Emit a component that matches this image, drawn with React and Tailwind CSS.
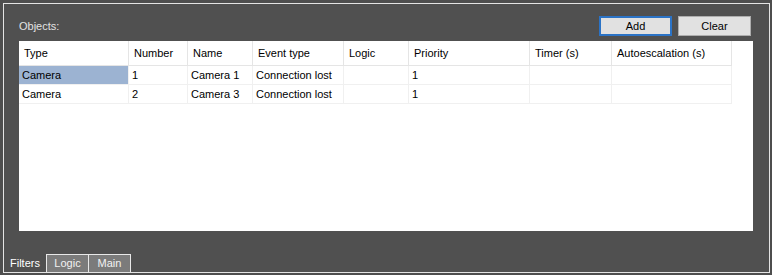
import React from 'react';

const columns = [
  { label: 'Type', w: 'w-[110px]' },
  { label: 'Number', w: 'w-[59px]' },
  { label: 'Name', w: 'w-[65px]' },
  { label: 'Event type', w: 'w-[91px]' },
  { label: 'Logic', w: 'w-[65px]' },
  { label: 'Priority', w: 'w-[121px]' },
  { label: 'Timer (s)', w: 'w-[82px]' },
  { label: 'Autoescalation (s)', w: 'w-[120px]' },
];

const rows = [
  ['Camera', '1', 'Camera 1', 'Connection lost', '', '1', '', ''],
  ['Camera', '2', 'Camera 3', 'Connection lost', '', '1', '', ''],
];

const App = () => {
  return (
    <div className="w-[772px] h-[275px] bg-[#4e4e4e] pt-[3px] pl-[3px] font-['Liberation_Sans',Arial,sans-serif] text-[11px] leading-none">
      <div className="w-[767px] h-[270px] border border-[#e4e4e4] bg-[#505050] flex flex-col">
        {/* Top bar */}
        <div className="mt-[12px] h-[20px] pl-[15px] pr-[18px] flex items-center">
          <span className="text-[#e2e2e2] pt-[1px]">Objects:</span>
          <div className="ml-auto flex gap-[6px]">
            <button className="w-[73px] h-[20px] border-2 border-[#2b73c6] bg-[#e1e1e1] text-black">
              Add
            </button>
            <button className="w-[73px] h-[20px] border border-[#adadad] bg-[#e1e1e1] text-black">
              Clear
            </button>
          </div>
        </div>

        {/* Grid */}
        <div className="mt-[5px] ml-[15px] w-[734px] h-[190px] bg-white text-black">
          <div className="flex">
            {columns.map((c) => (
              <div
                key={c.label}
                className={`${c.w} h-[25px] pl-[5px] flex items-center border-r border-b border-[#e5e5e5]`}
              >
                {c.label}
              </div>
            ))}
          </div>
          {rows.map((r, i) => (
            <div key={i} className="flex">
              {r.map((v, j) => (
                <div
                  key={j}
                  className={`${columns[j].w} h-[19px] pl-[3px] flex items-center border-r border-b border-[#f0f0f0] ${
                    i === 0 && j === 0 ? 'bg-[#9cb3d2]' : ''
                  }`}
                >
                  {v}
                </div>
              ))}
            </div>
          ))}
        </div>

        {/* Tabs */}
        <div className="mt-auto flex h-[18px]">
          <div className="w-[42px] flex items-center justify-center text-white">Filters</div>
          <div className="w-[43px] flex items-center justify-center border-l border-t border-r border-[#e8e8e8] bg-[#7b7b7b] text-[#f2f2f2]">
            Logic
          </div>
          <div className="w-[42px] flex items-center justify-center border-t border-r border-[#e8e8e8] bg-[#7b7b7b] text-[#f2f2f2]">
            Main
          </div>
        </div>
      </div>
    </div>
  );
};

export default App;
